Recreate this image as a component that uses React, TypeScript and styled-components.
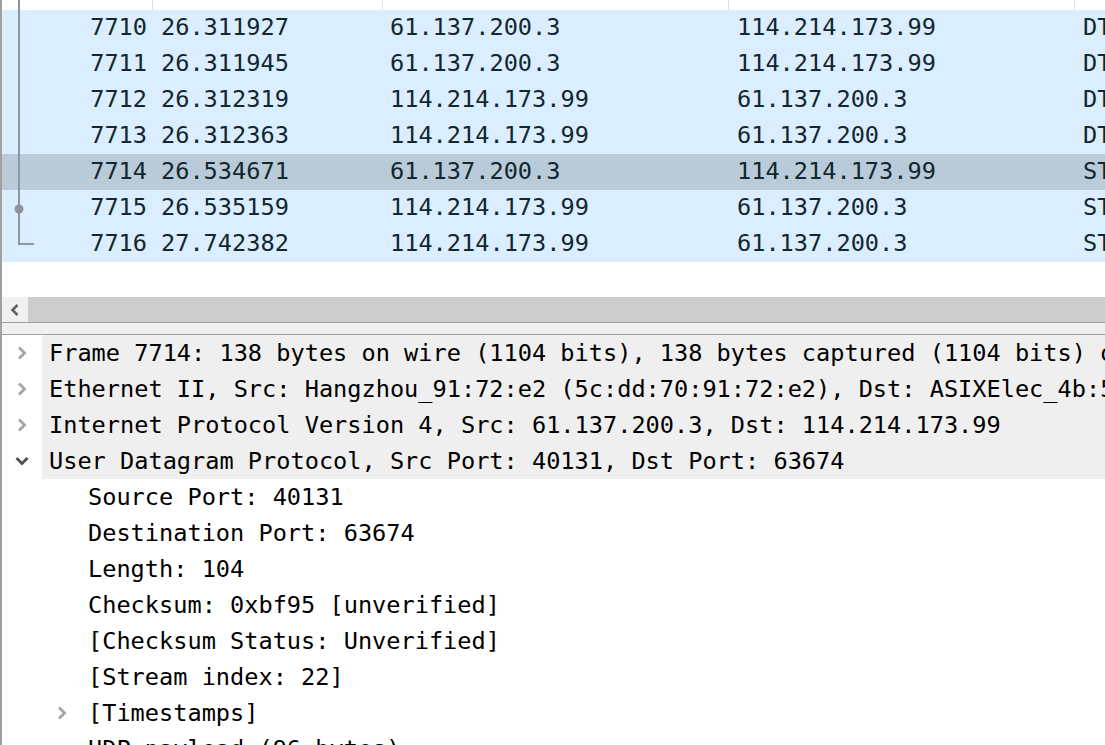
import React from "react";
import styled, { createGlobalStyle } from "styled-components";

const Global = createGlobalStyle`
  html, body { margin: 0; padding: 0; background: #ffffff; overflow: hidden; }
  #root { width: 1105px; height: 745px; }
`;

const MONO = `"DejaVu Sans Mono", "Liberation Mono", monospace`;

const Window = styled.div`
  width: 1105px;
  height: 745px;
  box-sizing: border-box;
  border-left: 2px solid #a0a0a0;
  overflow: hidden;
  display: flex;
  flex-direction: column;
  font-family: ${MONO};
  font-size: 23.6px;
  background: #ffffff;
`;

const PacketList = styled.div`
  position: relative;
  height: 297px;
  flex: none;
  overflow: hidden;
  background: #ffffff;
`;

const COLS = [151, 230, 346, 346, 200];

const HeaderStrip = styled.div`
  height: 10px;
  display: flex;
`;

const HeaderCell = styled.div<{ $w: number }>`
  flex: none;
  width: ${(p) => p.$w}px;
  box-sizing: border-box;
  border-right: 1px solid #dfdfdf;
`;

const PacketRow = styled.div<{ $selected?: boolean }>`
  height: 36px;
  box-sizing: border-box;
  padding-bottom: 3px;
  display: flex;
  align-items: center;
  white-space: nowrap;
  background: ${(p) => (p.$selected ? "#b9cad8" : "#daeeff")};
  color: #12272e;
`;

const Cell = styled.div<{ $w: number; $pad: number; $right?: boolean }>`
  flex: none;
  width: ${(p) => p.$w}px;
  box-sizing: border-box;
  overflow: hidden;
  text-align: ${(p) => (p.$right ? "right" : "left")};
  padding: ${(p) => (p.$right ? `0 ${p.$pad}px 0 0` : `0 0 0 ${p.$pad}px`)};
`;

const Related = styled.svg`
  position: absolute;
  left: 0;
  top: 0;
  pointer-events: none;
`;

const HScroll = styled.div`
  height: 25px;
  flex: none;
  display: flex;
  background: #cdcdcd;
`;

const ScrollButton = styled.div`
  width: 26px;
  background: #f0f0f0;
  display: flex;
  align-items: center;
  justify-content: center;
`;

const Splitter = styled.div`
  height: 11px;
  flex: none;
  background: #f0f0f0;
  border-top: 1px solid #a0a0a0;
  border-bottom: 1px solid #a0a0a0;
`;

const Tree = styled.div`
  flex: 1;
  overflow: hidden;
  background: #ffffff;
`;

const TreeRow = styled.div<{ $indent: number }>`
  height: 36px;
  display: flex;
  padding-left: ${(p) => p.$indent}px;
  white-space: nowrap;
`;

const Expander = styled.div<{ $w: number }>`
  flex: none;
  width: ${(p) => p.$w}px;
  display: flex;
  align-items: center;
  justify-content: center;
`;

const Label = styled.div<{ $shade?: boolean }>`
  flex: 1;
  display: flex;
  align-items: center;
  padding-left: 7px;
  color: #000000;
  background: ${(p) => (p.$shade ? "#efefef" : "transparent")};
  overflow: hidden;
`;

const Chevron: React.FC<{ open?: boolean }> = ({ open }) =>
  open ? (
    <svg width="16" height="12" viewBox="0 0 16 12">
      <polyline points="2.5,3 8,8.5 13.5,3" fill="none" stroke="#505050" strokeWidth="2.8" />
    </svg>
  ) : (
    <svg width="12" height="16" viewBox="0 0 12 16">
      <polyline points="3,2.5 8.5,8 3,13.5" fill="none" stroke="#a6a6a6" strokeWidth="2.8" />
    </svg>
  );

const packets = [
  ["7710", "26.311927", "61.137.200.3", "114.214.173.99", "DTLS"],
  ["7711", "26.311945", "61.137.200.3", "114.214.173.99", "DTLS"],
  ["7712", "26.312319", "114.214.173.99", "61.137.200.3", "DTLS"],
  ["7713", "26.312363", "114.214.173.99", "61.137.200.3", "DTLS"],
  ["7714", "26.534671", "61.137.200.3", "114.214.173.99", "STUN"],
  ["7715", "26.535159", "114.214.173.99", "61.137.200.3", "STUN"],
  ["7716", "27.742382", "114.214.173.99", "61.137.200.3", "STUN"],
];

type Node = { text: string; depth: number; exp?: "open" | "closed"; shade?: boolean };

const nodes: Node[] = [
  { text: "Frame 7714: 138 bytes on wire (1104 bits), 138 bytes captured (1104 bits) on interface \\Device\\NPF_{0}, id 0", depth: 0, exp: "closed", shade: true },
  { text: "Ethernet II, Src: Hangzhou_91:72:e2 (5c:dd:70:91:72:e2), Dst: ASIXElec_4b:5c:3f (00:0e:c6:4b:5c:3f)", depth: 0, exp: "closed", shade: true },
  { text: "Internet Protocol Version 4, Src: 61.137.200.3, Dst: 114.214.173.99", depth: 0, exp: "closed", shade: true },
  { text: "User Datagram Protocol, Src Port: 40131, Dst Port: 63674", depth: 0, exp: "open", shade: true },
  { text: "Source Port: 40131", depth: 1 },
  { text: "Destination Port: 63674", depth: 1 },
  { text: "Length: 104", depth: 1 },
  { text: "Checksum: 0xbf95 [unverified]", depth: 1 },
  { text: "[Checksum Status: Unverified]", depth: 1 },
  { text: "[Stream index: 22]", depth: 1 },
  { text: "[Timestamps]", depth: 1, exp: "closed" },
  { text: "UDP payload (96 bytes)", depth: 1 },
];

const PADS = [6, 8, 7, 8, 8];

export default function App() {
  return (
    <>
      <Global />
      <Window>
        <PacketList>
          <HeaderStrip>
            {COLS.map((w, i) => (
              <HeaderCell key={i} $w={w} />
            ))}
          </HeaderStrip>
          {packets.map((p, i) => (
            <PacketRow key={p[0]} $selected={i === 4}>
              {p.map((v, c) => (
                <Cell key={c} $w={COLS[c]} $pad={PADS[c]} $right={c === 0}>
                  {v}
                </Cell>
              ))}
            </PacketRow>
          ))}
          <Related width="40" height="260">
            <line x1="17" y1="0" x2="17" y2="244" stroke="#8e959b" strokeWidth="2" />
            <line x1="16" y1="244" x2="32" y2="244" stroke="#8e959b" strokeWidth="2" />
            <circle cx="17" cy="209" r="4.5" fill="#8e959b" />
          </Related>
        </PacketList>
        <HScroll>
          <ScrollButton>
            <svg width="12" height="14" viewBox="0 0 12 14">
              <polyline points="8.5,2 3.5,7 8.5,12" fill="none" stroke="#606060" strokeWidth="2.6" />
            </svg>
          </ScrollButton>
        </HScroll>
        <Splitter />
        <Tree>
          {nodes.map((n, i) => (
            <TreeRow key={i} $indent={n.depth * 40}>
              <Expander $w={n.depth === 0 ? 40 : 39}>
                {n.exp ? <Chevron open={n.exp === "open"} /> : null}
              </Expander>
              <Label $shade={n.shade}>{n.text}</Label>
            </TreeRow>
          ))}
        </Tree>
      </Window>
    </>
  );
}
